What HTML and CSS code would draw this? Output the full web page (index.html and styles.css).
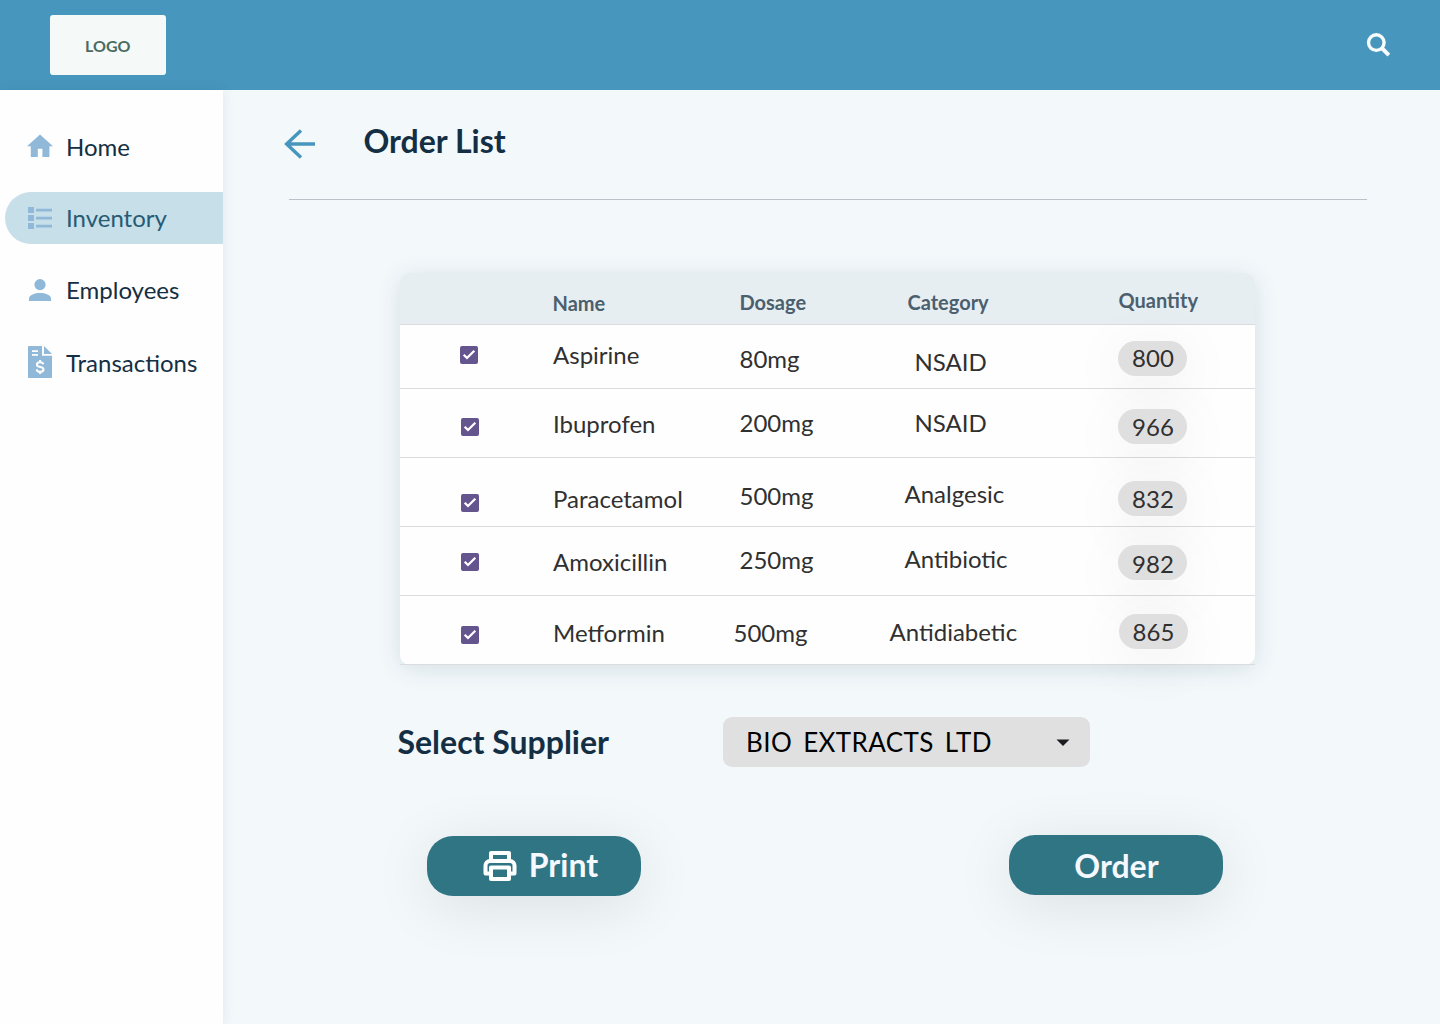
FILE: index.html
```html
<!DOCTYPE html>
<html lang="en">
<head>
<meta charset="utf-8">
<title>Order List</title>
<link rel="stylesheet" href="styles.css">
</head>
<body>
<svg class="defs" width="0" height="0" aria-hidden="true">
  <symbol id="check" viewBox="0 0 18 18"><path d="M3.700 8.700 7 12 14.300 4.800" fill="none" stroke="#fff" stroke-width="2.300"/></symbol>
</svg>
<header class="topbar">
  <div class="logo">LOGO</div>
  <svg class="search" width="24" height="24" viewBox="0 0 24 24" fill="none" stroke="#f8fcfd" stroke-width="3.4"><circle cx="10.3" cy="9.6" r="7.8"/><path d="M15.700 15l7.200 7.200" stroke-width="4"/></svg>
</header>
<div class="body">
  <nav class="sidebar">
    <a class="item home"><svg width="26" height="24" viewBox="0 0 26 24"><path d="M13 .5 0 12.200h3.800V23h7v-8.300h4.600V23h7V12.200H26z"/></svg>Home</a>
    <a class="item active"><svg width="26" height="24" viewBox="0 0 26 24"><path d="M1 1h6v6H1zM9 2.700h16v2.800H9zM1 9h6v6H1zM9 10.700h16v2.800H9zM1 17h6v6H1zM9 18.700h16v2.800H9z"/></svg>Inventory</a>
    <a class="item people"><svg width="26" height="24" viewBox="0 0 26 24"><circle cx="13" cy="6.600" r="5.600"/><path d="M2 23v-2.500C2 16.700 8 14.900 13 14.900S24 16.700 24 20.500V23z"/></svg>Employees</a>
    <a class="item money"><svg width="26" height="32" viewBox="0 0 26 32"><path d="M2 0h13v9.700h10V31a1 1 0 0 1-1 1H2a1 1 0 0 1-1-1V1a1 1 0 0 1 1-1z"/><path d="M17 0v8h8z"/><path d="M5 4.200h6v1.800H5zM5 8h6v1.800H5z" fill="#fefefe"/><path d="M16.200 18.300c-.3-1.500-1.500-2-3.100-2-1.800 0-3.200.8-3.200 2.400 0 3.400 6.600 1.400 6.600 4.700 0 1.600-1.500 2.400-3.400 2.400-1.800 0-3.200-.8-3.400-2.500M13.100 14v3M13.100 25v3" fill="none" stroke="#fefefe" stroke-width="2"/></svg>Transactions</a>
  </nav>
  <main class="content">
    <div class="heading">
      <svg width="32" height="30" viewBox="0 0 32 30" fill="none" stroke="#4796be" stroke-width="3.400"><path d="M2.300 15H31M17 1.400 2.600 15 17 28.600"/></svg>
      <h1>Order List</h1>
    </div>
    <section class="table">
      <div class="row head"><span></span><span>Name</span><span>Dosage</span><span>Category</span><span>Quantity</span></div>
      <div class="row r1"><svg class="box"><use href="#check"/></svg><span>Aspirine</span><span>80mg</span><span>NSAID</span><span class="pill">800</span></div>
      <div class="row r2"><svg class="box"><use href="#check"/></svg><span>Ibuprofen</span><span>200mg</span><span>NSAID</span><span class="pill">966</span></div>
      <div class="row r3"><svg class="box"><use href="#check"/></svg><span>Paracetamol</span><span>500mg</span><span>Analgesic</span><span class="pill">832</span></div>
      <div class="row r4"><svg class="box"><use href="#check"/></svg><span>Amoxicillin</span><span>250mg</span><span>Antibiotic</span><span class="pill">982</span></div>
      <div class="row r5"><svg class="box"><use href="#check"/></svg><span>Metformin</span><span>500mg</span><span>Antidiabetic</span><span class="pill">865</span></div>
    </section>
    <div class="supplier">
      <h2>Select Supplier</h2>
      <div class="select"><span>BIO EXTRACTS LTD</span><svg width="14" height="7" viewBox="0 0 14 7"><path d="M.5.500h13L7 7z" fill="#1d1b20"/></svg></div>
    </div>
    <div class="actions">
      <button class="print"><svg width="34" height="32" viewBox="0 0 34 32" fill="none" stroke="#fff" stroke-width="4" stroke-linejoin="round"><path d="M8 11V3h18v8M8 23.500H2.500V15.500a4.500 4.500 0 0 1 4.500-4.500h20a4.500 4.500 0 0 1 4.500 4.500v8H26M8 17.500h18v11.500H8z"/></svg><span>Print</span></button>
      <button class="order"><span>Order</span></button>
    </div>
  </main>
</div>
</body>
</html>
```
FILE: styles.css
```css
* { box-sizing: border-box; }
body {
  margin: 0;
  height: 1024px;
  overflow: hidden;
  display: flex;
  flex-direction: column;
  background: #f3f8fb;
  font-family: Lato, "Liberation Sans", sans-serif;
  color: #142f43;
}
svg { display: block; flex: none; }
.defs { position: absolute; }
.topbar {
  height: 90px;
  flex: none;
  padding: 15px 50px;
  display: flex;
  justify-content: space-between;
  background: #4796be;
}
.logo {
  width: 115.5px;
  height: 60px;
  border-radius: 3px;
  background: #f5faf9;
  color: #4a6b62;
  font-size: 16px;
  font-weight: 700;
  line-height: 62px;
  text-align: center;
}
.search { margin-top: 18px; }
.body { flex: 1; display: flex; }
.sidebar {
  width: 223px;
  padding: 31px 0 0 5px;
  background: #fefefe;
  box-shadow: 0 0 12px rgba(30, 60, 80, .09);
}
.item {
  height: 52px;
  padding: 0 0 2px 22px;
  display: flex;
  align-items: center;
  gap: 13px;
  border-radius: 26px 0 0 26px;
  font-size: 24px;
}
.item svg { fill: #90b8d8; margin-top: 2px; }
.home { margin-bottom: 19px; }
.home svg { margin-top: -1px; }
.active { background: #c7dfe9; color: #265b73; margin-bottom: 20px; }
.people { margin-bottom: 21px; }
.people svg { margin-top: 1px; }
.money svg { margin-top: -1px; }
.content { flex: 1; }
.heading {
  width: 1078px;
  height: 110px;
  margin-left: 66px;
  border-bottom: 1px solid #b9c0c8;
  display: flex;
}
.heading svg { margin: 38.5px 0 0 -5px; }
h1, h2 { margin: 0; font-size: 32px; font-weight: 700; line-height: 38px; }
h1 { margin: 32px 0 0 47.5px; }
.table {
  width: 855px;
  margin: 73px 0 0 177px;
  border-radius: 10px;
  background: linear-gradient(#e7eef2 52px, #fefefe 52px);
  box-shadow: 0 4px 24px rgba(20, 60, 80, .12);
}
.row {
  height: 69px;
  display: grid;
  grid-template-columns: 152px 181px 156px 228px 138px;
  align-items: start;
  border-bottom: 1px solid #dadcdd;
  color: #303030;
  font-size: 24px;
  line-height: 30px;
}
.head { height: 52px; font-size: 20px; font-weight: 700; line-height: 24px; color: #4b606e; }
.head :nth-child(2) { margin: 18px 0 0 .5px; }
.head :nth-child(3) { margin: 17px 0 0 6.5px; }
.head :nth-child(4) { margin: 17px 0 0 18.500px; }
.head :nth-child(5) { margin: 15px 0 0 1.5px; }
.box { width: 18px; height: 18px; border-radius: 2px; background: #65558f; }
.pill {
  width: 69px;
  height: 35px;
  padding-left: 1px;
  border-radius: 18px;
  background: #dfdfdf;
  line-height: 35px;
  text-align: center;
  box-shadow: 0 10px 60px rgba(0, 0, 0, .075);
}
.r1 { height: 64px; }
.r1 .box { margin: 21px 0 0 60px; }
.r1 :nth-child(2) { margin: 15px 0 0 1px; }
.r1 :nth-child(3) { margin: 19px 0 0 6.5px; }
.r1 :nth-child(4) { margin: 22px 0 0 25.5px; }
.r1 .pill { margin: 16px 0 0 1px; line-height: 34px; }
.r2 .box { margin: 29px 0 0 61px; }
.r2 :nth-child(2) { margin: 20px 0 0 1px; }
.r2 :nth-child(3) { margin: 19px 0 0 6.5px; }
.r2 :nth-child(4) { margin: 19px 0 0 25.5px; }
.r2 .pill { margin: 20px 0 0 1px; }
.r3 .box { margin: 36px 0 0 61px; }
.r3 :nth-child(2) { margin: 26px 0 0 1px; }
.r3 :nth-child(3) { margin: 23px 0 0 6.5px; }
.r3 :nth-child(4) { margin: 21px 0 0 15.5px; }
.r3 .pill { margin: 23px 0 0 1px; }
.r4 .box { margin: 26px 0 0 61px; }
.r4 :nth-child(2) { margin: 20px 0 0 1px; }
.r4 :nth-child(3) { margin: 18px 0 0 6.5px; }
.r4 :nth-child(4) { margin: 17px 0 0 15.5px; }
.r4 .pill { margin: 18px 0 0 1px; line-height: 37px; }
.r5 .box { margin: 30px 0 0 61px; }
.r5 :nth-child(2) { margin: 22px 0 0 1px; }
.r5 :nth-child(3) { margin: 22px 0 0 .5px; }
.r5 :nth-child(4) { margin: 21px 0 0 .5px; }
.r5 .pill { margin: 18px 0 0 2px; padding-left: 0; }
.supplier { display: flex; margin: 52px 0 0 174px; }
.supplier h2 { width: 325.5px; margin: 6px 0 0 .5px; }
.select {
  width: 367px;
  height: 50px;
  padding: 0 20px 0 23px;
  border-radius: 9px;
  background: #e0e0e0;
  display: flex;
  align-items: center;
  justify-content: space-between;
  color: #000;
  font-size: 26px;
  letter-spacing: .4px;
  word-spacing: 4px;
}
.actions { display: flex; justify-content: space-between; width: 796px; margin: 68px 0 0 204px; }
button {
  width: 214px;
  height: 60px;
  padding: 0;
  border: 0;
  border-radius: 26px;
  display: flex;
  align-items: center;
  justify-content: center;
  background: #307584;
  color: #f5f9ff;
  font: 700 32px/38px Lato, "Liberation Sans", sans-serif;
  box-shadow: 0 10px 60px rgba(0, 0, 0, .1);
}
.print { margin-top: 1px; gap: 12px; padding-left: 13px; }
.print span { margin-bottom: 2px; }
.order span { margin: 2px 0 0 1px; }
```
